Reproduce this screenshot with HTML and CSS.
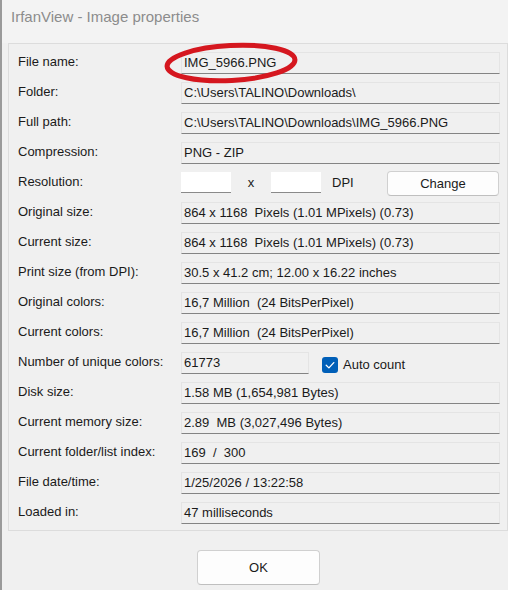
FILE: index.html
```html
<!DOCTYPE html>
<html>
<head>
<meta charset="utf-8">
<link rel="stylesheet" href="styles.css">
</head>
<body>
<div class="window">
  <div class="titlebar">IrfanView - Image properties</div>
  <div class="group">
    <div class="row"><span class="label">File name:</span><span class="field">IMG_5966.PNG</span></div>
    <div class="row"><span class="label">Folder:</span><span class="field">C:\Users\TALINO\Downloads\</span></div>
    <div class="row"><span class="label">Full path:</span><span class="field">C:\Users\TALINO\Downloads\IMG_5966.PNG</span></div>
    <div class="row"><span class="label">Compression:</span><span class="field">PNG - ZIP</span></div>
    <div class="row">
      <span class="label">Resolution:</span>
      <div class="res">
        <span class="input"></span>
        <span class="times">x</span>
        <span class="input"></span>
        <span class="dpi">DPI</span>
        <span class="btn change">Change</span>
      </div>
    </div>
    <div class="row"><span class="label">Original size:</span><span class="field">864 x 1168&nbsp; Pixels (1.01 MPixels) (0.73)</span></div>
    <div class="row"><span class="label">Current size:</span><span class="field">864 x 1168&nbsp; Pixels (1.01 MPixels) (0.73)</span></div>
    <div class="row"><span class="label">Print size (from DPI):</span><span class="field">30.5 x 41.2 cm; 12.00 x 16.22 inches</span></div>
    <div class="row"><span class="label">Original colors:</span><span class="field">16,7 Million&nbsp; (24 BitsPerPixel)</span></div>
    <div class="row"><span class="label">Current colors:</span><span class="field">16,7 Million&nbsp; (24 BitsPerPixel)</span></div>
    <div class="row">
      <span class="label">Number of unique colors:</span>
      <div class="uniq">
        <span class="field short">61773</span>
        <span class="check"><svg width="16" height="16" viewBox="0 0 16 16"><rect x="0" y="0" width="16" height="16" rx="3" fill="#005fb8"/><path d="M4.2 8.3 L6.9 10.9 L11.8 5.6" fill="none" stroke="#fff" stroke-width="1.3" stroke-linecap="round" stroke-linejoin="round"/></svg></span>
        <span class="checklabel">Auto count</span>
      </div>
    </div>
    <div class="row"><span class="label">Disk size:</span><span class="field">1.58 MB (1,654,981 Bytes)</span></div>
    <div class="row"><span class="label">Current memory size:</span><span class="field">2.89&nbsp; MB (3,027,496 Bytes)</span></div>
    <div class="row"><span class="label">Current folder/list index:</span><span class="field">169&nbsp; /&nbsp; 300</span></div>
    <div class="row"><span class="label">File date/time:</span><span class="field">1/25/2026 / 13:22:58</span></div>
    <div class="row"><span class="label">Loaded in:</span><span class="field">47 milliseconds</span></div>
  </div>
  <div class="footer"><span class="btn ok">OK</span></div>
  <svg class="circle" width="150" height="50" viewBox="0 0 150 50"><ellipse cx="75" cy="25" rx="64" ry="17.5" transform="rotate(-3 75 25)" fill="none" stroke="#d5171f" stroke-width="5"/></svg>
</div>
</body>
</html>
```
FILE: styles.css
```css
html, body {
  margin: 0;
  padding: 0;
  background: #f0f0f0;
}
body {
  width: 508px;
  height: 590px;
  overflow: hidden;
  font-family: "Liberation Sans", Arial, sans-serif;
  font-size: 13px;
  color: #1a1a1a;
}
.window {
  position: relative;
  height: 590px;
  border-left: 2px solid #9a9a9a;
  background: #f0f0f0;
}
.titlebar {
  height: 43px;
  box-sizing: border-box;
  padding: 8px 0 0 9px;
  font-size: 15px;
  color: #8c8c8c;
  background: #f3f3f3;
}
.group {
  margin-left: 6px;
  width: 500px;
  box-sizing: border-box;
  border: 1px solid #dcdcdc;
  padding: 8px 7px 6px 8px;
  display: flex;
  flex-direction: column;
  gap: 8px;
}
.row {
  display: flex;
  align-items: flex-start;
  height: 22px;
  line-height: 20px;
}
.label {
  width: 164px;
  flex: none;
  padding-left: 1px;
  box-sizing: border-box;
}
.field {
  flex: 1;
  height: 22px;
  box-sizing: border-box;
  border: 1px solid #e4e4e4;
  border-bottom: 1px solid #848484;
  padding: 0 0 0 2px;
  line-height: 19px;
  white-space: nowrap;
}
.field.short {
  flex: none;
  width: 128px;
}
.res, .uniq {
  flex: 1;
  display: flex;
  align-items: flex-start;
  height: 22px;
}
.input {
  width: 50px;
  height: 21px;
  box-sizing: border-box;
  background: #fff;
  border-bottom: 1px solid #8a8a8a;
}
.times {
  width: 40px;
  text-align: center;
  line-height: 22px;
}
.dpi {
  margin-left: 11px;
  width: 55px;
  line-height: 22px;
}
.btn {
  display: flex;
  align-items: center;
  justify-content: center;
  background: #fdfdfd;
  border: 1px solid #d0d0d0;
  border-bottom-color: #bfbfbf;
  border-radius: 4px;
  box-sizing: border-box;
}
.change {
  width: 112px;
  height: 25px;
  margin-top: -1px;
}
.check {
  margin-left: 13px;
  margin-top: 5px;
  width: 16px;
  height: 16px;
  display: flex;
}
.checklabel {
  margin-left: 5px;
  margin-top: 3px;
}
.footer {
  padding: 19px 0 0 195px;
}
.ok {
  width: 123px;
  height: 35px;
}
.circle {
  position: absolute;
  left: 154px;
  top: 38px;
}
```
